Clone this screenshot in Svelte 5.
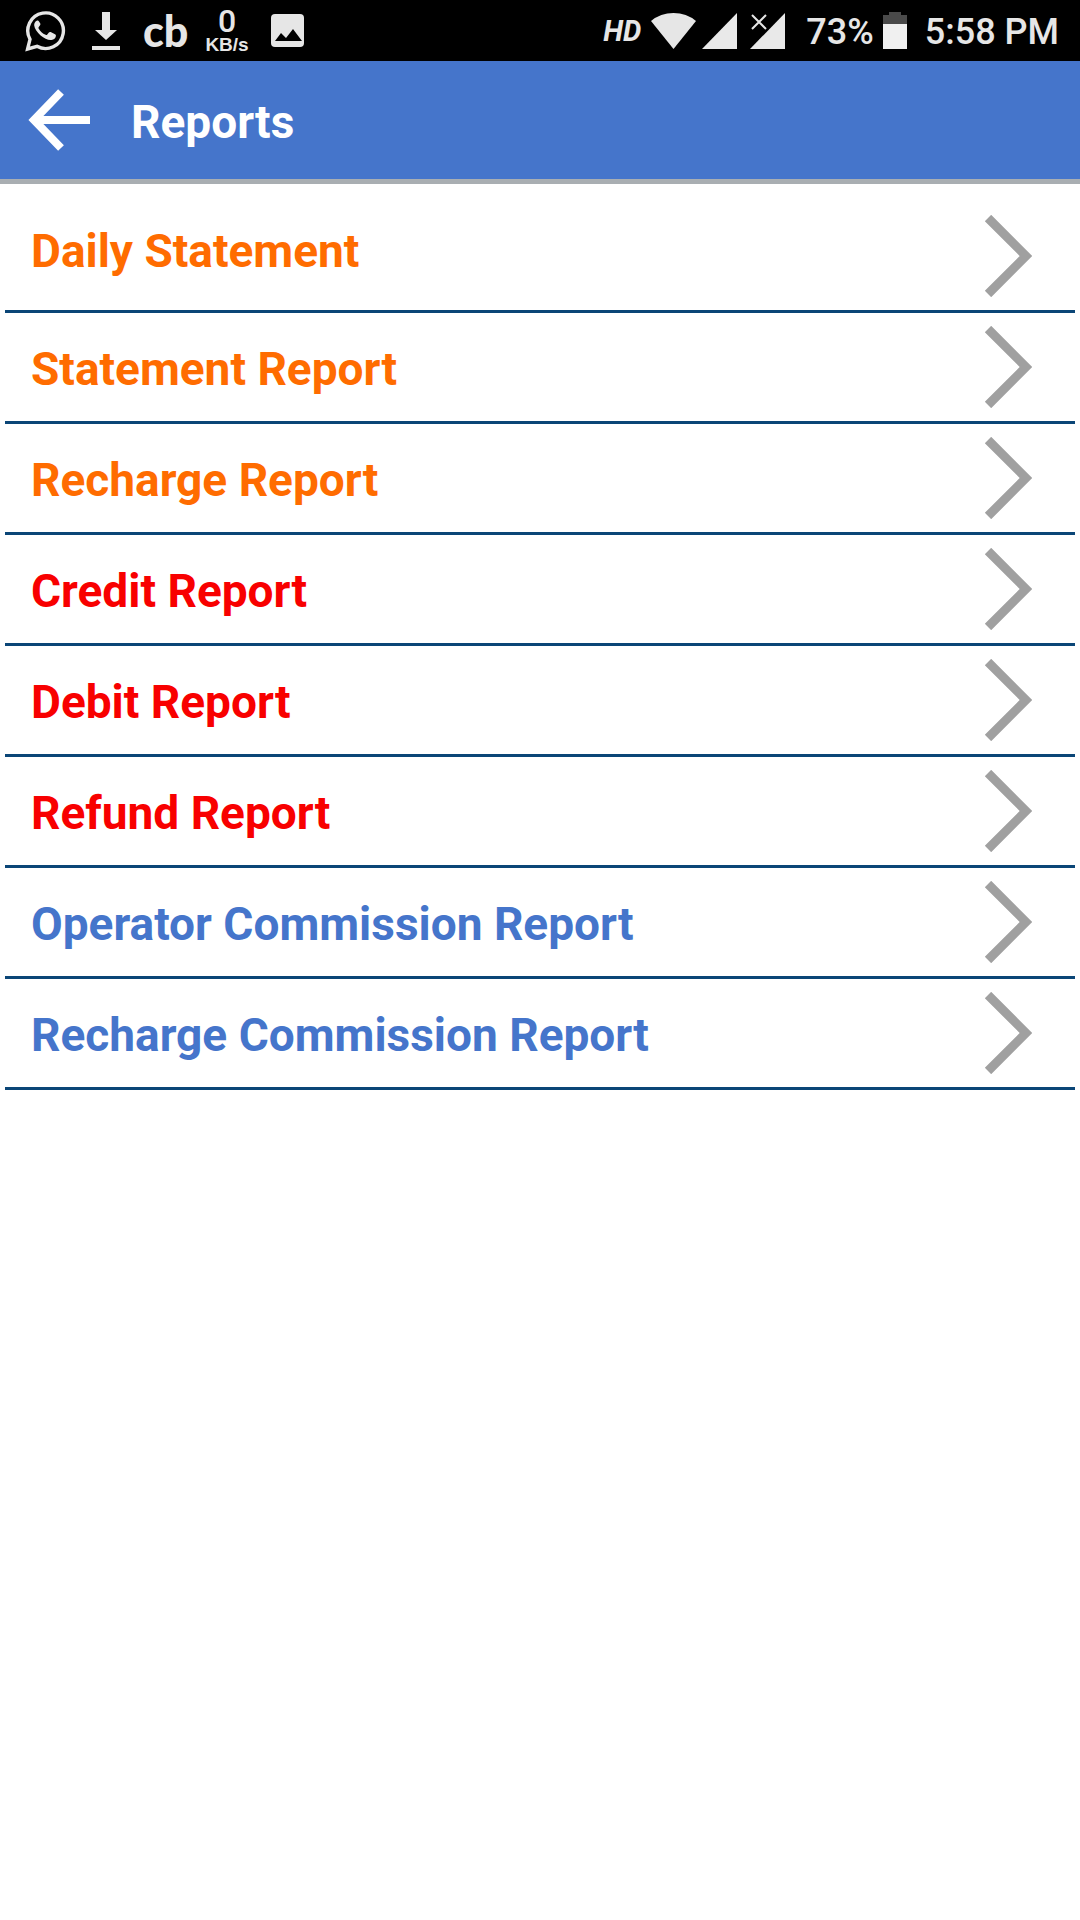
<script>
    const reports = [
        { title: "Daily Statement", slug: "daily-statement", tone: "orange" },
        { title: "Statement Report", slug: "statement", tone: "orange" },
        { title: "Recharge Report", slug: "recharge", tone: "orange" },
        { title: "Credit Report", slug: "credit", tone: "red" },
        { title: "Debit Report", slug: "debit", tone: "red" },
        { title: "Refund Report", slug: "refund", tone: "red" },
        { title: "Operator Commission Report", slug: "operator-commission", tone: "blue" },
        { title: "Recharge Commission Report", slug: "recharge-commission", tone: "blue" }
    ];
</script>

<div class="status-bar">
    <div class="notifications">
        <svg width="42" height="42" viewBox="0 0 42 42" aria-hidden="true">
            <path d="M2.600 39 L5 29.3 A17.8 17.8 0 1 1 12 36.3 Z" fill="none" stroke="#e6e6e6" stroke-width="3.4" />
            <path d="M14 11.500c-.6-1.2-1.4-1-2.3-.8-1.700.8-2.700 2.600-2.500 4.900.4 3 3 6.900 6.400 9.900 3.600 3 7.900 4.900 10.900 4.400 2.400-.4 4.200-1.900 4.400-4 .1-.9-.2-1.300-.9-1.700l-4.300-2.100c-.8-.4-1.300-.2-1.800.4l-1.600 2c-.5.6-1 .6-1.700.3-3.100-1.400-5.400-3.500-7-6.400-.3-.6-.3-1 .2-1.500l1.400-1.800c.3-.5.3-.9.100-1.500z" fill="#e6e6e6" />
        </svg>
        <svg width="42" height="42" viewBox="0 0 42 42" aria-hidden="true">
            <path d="M18 2h8v18h7L22 30 11 20h7zM8 36h28v4H8z" fill="#e6e6e6" />
        </svg>
        <span class="brand">cb</span>
        <span class="speed"><b>0</b><small>KB/s</small></span>
        <svg width="42" height="42" viewBox="0 0 42 42" aria-hidden="true">
            <rect x="5" y="4" width="33" height="33" rx="4" fill="#e6e6e6" />
            <path d="M9 31l6-8 5 5 7-9 9 12z" fill="#000" />
        </svg>
    </div>
    <div class="system">
        <span class="hd">HD</span>
        <svg width="45" height="36" viewBox="0 0 45 36" aria-hidden="true">
            <path d="M22.500 36L0 8Q9.500 0 22.500 0T45 8z" fill="#e6e6e6" />
        </svg>
        <svg width="35" height="36" viewBox="0 0 35 36" aria-hidden="true">
            <path d="M35 0v36H0z" fill="#e9e9e9" />
        </svg>
        <svg class="no-signal" width="35" height="36" viewBox="0 0 35 36" aria-hidden="true">
            <path d="M35 0v36H0z" fill="#e9e9e9" />
            <path d="M2 2l14 14M16 2L2 16" stroke="#000" stroke-width="6" />
            <path d="M2 2l14 14M16 2L2 16" stroke="#e6e6e6" stroke-width="2" />
        </svg>
        <span class="percent">73%</span>
        <svg width="24" height="37" viewBox="0 0 24 37" aria-hidden="true">
            <path d="M6 0h12v3h6v9H0V3h6z" fill="#4a4a4a" />
            <path d="M0 12h24v25H0z" fill="#f0f0f0" />
        </svg>
        <span class="time">5:58 PM</span>
    </div>
</div>

<header>
    <button aria-label="Back">
        <svg width="62" height="62" viewBox="0 0 62 62" aria-hidden="true">
            <path d="M33 3L6 31l27 28M6 31h56" fill="none" stroke="#fff" stroke-width="8" />
        </svg>
    </button>
    <h1>Reports</h1>
</header>

<main>
    {#each reports as report}
        <a href="/reports/{report.slug}" class="report {report.tone}">
            <span>{report.title}</span>
            <svg width="48" height="82" viewBox="0 0 48 82" aria-hidden="true">
                <path d="M4 3l38 38L4 79" fill="none" stroke="#a0a0a0" stroke-width="9" />
            </svg>
        </a>
    {/each}
</main>

<style>
    :global(body) {
        margin: 0;
        background-color: #fff;
        font-family: Roboto, "Liberation Sans", sans-serif;
    }

    svg {
        display: block;
        flex-shrink: 0;
    }

    .status-bar {
        display: flex;
        justify-content: space-between;
        height: 61px;
        padding: 0 21px 0 25px;
        background-color: #000;
        color: #e6e6e6;
    }

    .notifications, .system {
        display: flex;
        align-items: center;
    }

    .notifications {
        gap: 17px;
    }

    .brand {
        font-family: Lato, sans-serif;
        font-size: 43px;
        font-weight: 900;
        line-height: 60px;
    }

    .speed {
        display: flex;
        flex-direction: column;
        align-items: center;
        font-family: "Liberation Sans", Arial, sans-serif;
    }

    .speed b {
        font-family: Roboto, sans-serif;
        font-size: 32px;
        font-weight: 500;
        line-height: 29px;
    }

    .speed small {
        font-size: 19px;
        font-weight: 700;
        line-height: 18px;
    }

    .hd {
        margin-right: 10px;
        font-size: 29px;
        font-style: italic;
        font-weight: 700;
        line-height: 60px;
    }

    .system svg + svg {
        margin-left: 6px;
    }

    .system .no-signal {
        margin-left: 13px;
    }

    .percent, .time {
        padding-top: 4px;
        font-size: 36px;
        font-weight: 500;
        line-height: 57px;
    }

    .percent {
        margin: 0 9px 0 21px;
    }

    .time {
        margin-left: 18px;
    }

    header {
        display: flex;
        align-items: center;
        gap: 41px;
        height: 118px;
        padding-left: 28px;
        border-bottom: 5px solid #a9aeb2;
        background-color: #4575cb;
    }

    button {
        padding: 0;
        border: 0;
        background: none;
        cursor: pointer;
    }

    h1 {
        margin: 4px 0 0;
        color: #fff;
        font-size: 46px;
        font-weight: 700;
        line-height: 56px;
    }

    main {
        padding: 0 5px;
    }

    .report {
        display: flex;
        align-items: center;
        justify-content: space-between;
        box-sizing: border-box;
        height: 111px;
        padding: 4px 43px 0 26px;
        border-bottom: 3px solid #0b4677;
        font-size: 46px;
        font-weight: 700;
        line-height: 56px;
        text-decoration: none;
    }

    .report:first-child {
        height: 129px;
        padding-top: 8px;
    }

    .report svg {
        align-self: flex-end;
        margin-bottom: 13px;
    }

    .orange {
        color: #ff6c00;
    }

    .red {
        color: #f80000;
    }

    .blue {
        color: #4575cb;
    }
</style>
